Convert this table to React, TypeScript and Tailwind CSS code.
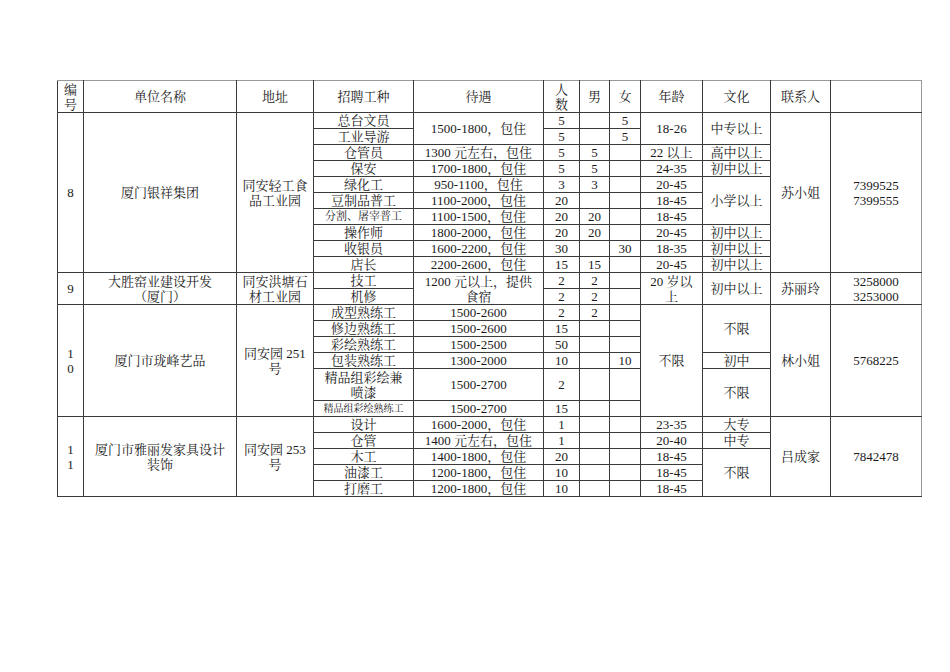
import React from "react";

type CP = { children?: React.ReactNode; rs?: number; cls?: string };
const C = ({ children, rs, cls }: CP) => (
  <td
    rowSpan={rs}
    className={
      "border border-[#3a3a3a] p-0 text-center align-middle whitespace-nowrap " +
      (cls || "")
    }
  >
    {children}
  </td>
);

const R = ({ children, tall }: { children: React.ReactNode; tall?: boolean }) => (
  <tr className={tall ? "h-[32px]" : "h-[16px]"}>{children}</tr>
);

export default function App() {
  return (
    <div
      className="min-h-[672px] w-[950px] bg-white pt-[80px] pl-[57px] text-[#1a1a1a] text-[13px] leading-[15px]"
      style={{ fontFamily: '"Liberation Serif", "Noto Serif CJK SC", "Noto Sans CJK SC", serif' }}
    >
      <table className="w-[864px] table-fixed border-collapse">
        <colgroup>
          <col className="w-[26px]" />
          <col className="w-[153px]" />
          <col className="w-[77px]" />
          <col className="w-[100px]" />
          <col className="w-[130px]" />
          <col className="w-[36px]" />
          <col className="w-[30px]" />
          <col className="w-[31px]" />
          <col className="w-[62px]" />
          <col className="w-[68px]" />
          <col className="w-[60px]" />
          <col className="w-[91px]" />
        </colgroup>
        <tbody>
          <R tall>
            <C cls="border-t-[#999]">编<br />号</C>
            <C cls="border-t-[#999]">单位名称</C>
            <C cls="border-t-[#999]">地址</C>
            <C cls="border-t-[#999]">招聘工种</C>
            <C cls="border-t-[#999]">待遇</C>
            <C cls="border-t-[#999]">人<br />数</C>
            <C cls="border-t-[#999]">男</C>
            <C cls="border-t-[#999]">女</C>
            <C cls="border-t-[#999]">年龄</C>
            <C cls="border-t-[#999]">文化</C>
            <C cls="border-t-[#999]">联系人</C>
            <C cls="border-t-[#999] border-r-[#999]"></C>
          </R>

          {/* 8 */}
          <R>
            <C rs={10}>8</C>
            <C rs={10}>厦门银祥集团</C>
            <C rs={10}>同安轻工食<br />品工业园</C>
            <C>总台文员</C>
            <C rs={2}>1500-1800，包住</C>
            <C>5</C>
            <C></C>
            <C>5</C>
            <C rs={2}>18-26</C>
            <C rs={2}>中专以上</C>
            <C rs={10}>苏小姐</C>
            <C rs={10} cls="border-r-[#999]">7399525<br />7399555</C>
          </R>
          <R>
            <C>工业导游</C>
            <C>5</C>
            <C></C>
            <C>5</C>
          </R>
          <R>
            <C>仓管员</C>
            <C>1300 元左右，包住</C>
            <C>5</C>
            <C>5</C>
            <C></C>
            <C>22 以上</C>
            <C>高中以上</C>
          </R>
          <R>
            <C>保安</C>
            <C>1700-1800，包住</C>
            <C>5</C>
            <C>5</C>
            <C></C>
            <C>24-35</C>
            <C>初中以上</C>
          </R>
          <R>
            <C>绿化工</C>
            <C>950-1100，包住</C>
            <C>3</C>
            <C>3</C>
            <C></C>
            <C>20-45</C>
            <C rs={3}>小学以上</C>
          </R>
          <R>
            <C>豆制品普工</C>
            <C>1100-2000，包住</C>
            <C>20</C>
            <C></C>
            <C></C>
            <C>18-45</C>
          </R>
          <R>
            <C cls="text-[11px]">分割、屠宰普工</C>
            <C>1100-1500，包住</C>
            <C>20</C>
            <C>20</C>
            <C></C>
            <C>18-45</C>
          </R>
          <R>
            <C>操作师</C>
            <C>1800-2000，包住</C>
            <C>20</C>
            <C>20</C>
            <C></C>
            <C>20-45</C>
            <C>初中以上</C>
          </R>
          <R>
            <C>收银员</C>
            <C>1600-2200，包住</C>
            <C>30</C>
            <C></C>
            <C>30</C>
            <C>18-35</C>
            <C>初中以上</C>
          </R>
          <R>
            <C>店长</C>
            <C>2200-2600，包住</C>
            <C>15</C>
            <C>15</C>
            <C></C>
            <C>20-45</C>
            <C>初中以上</C>
          </R>

          {/* 9 */}
          <R>
            <C rs={2}>9</C>
            <C rs={2}>大胜窑业建设开发<br />（厦门）</C>
            <C rs={2}>同安洪塘石<br />材工业园</C>
            <C>技工</C>
            <C rs={2}>1200 元以上，提供<br />食宿</C>
            <C>2</C>
            <C>2</C>
            <C></C>
            <C rs={2}>20 岁以<br />上</C>
            <C rs={2}>初中以上</C>
            <C rs={2}>苏丽玲</C>
            <C rs={2} cls="border-r-[#999]">3258000<br />3253000</C>
          </R>
          <R>
            <C>机修</C>
            <C>2</C>
            <C>2</C>
            <C></C>
          </R>

          {/* 10 */}
          <R>
            <C rs={6}>1<br />0</C>
            <C rs={6}>厦门市珑峰艺品</C>
            <C rs={6}>同安园 251<br />号</C>
            <C>成型熟练工</C>
            <C>1500-2600</C>
            <C>2</C>
            <C>2</C>
            <C></C>
            <C rs={6}>不限</C>
            <C rs={3}>不限</C>
            <C rs={6}>林小姐</C>
            <C rs={6} cls="border-r-[#999]">5768225</C>
          </R>
          <R>
            <C>修边熟练工</C>
            <C>1500-2600</C>
            <C>15</C>
            <C></C>
            <C></C>
          </R>
          <R>
            <C>彩绘熟练工</C>
            <C>1500-2500</C>
            <C>50</C>
            <C></C>
            <C></C>
          </R>
          <R>
            <C>包装熟练工</C>
            <C>1300-2000</C>
            <C>10</C>
            <C></C>
            <C>10</C>
            <C>初中</C>
          </R>
          <R tall>
            <C>精品组彩绘兼<br />喷漆</C>
            <C>1500-2700</C>
            <C>2</C>
            <C></C>
            <C></C>
            <C rs={2}>不限</C>
          </R>
          <R>
            <C cls="text-[10px]">精品组彩绘熟练工</C>
            <C>1500-2700</C>
            <C>15</C>
            <C></C>
            <C></C>
          </R>

          {/* 11 */}
          <R>
            <C rs={5}>1<br />1</C>
            <C rs={5}>厦门市雅丽发家具设计<br />装饰</C>
            <C rs={5}>同安园 253<br />号</C>
            <C>设计</C>
            <C>1600-2000，包住</C>
            <C>1</C>
            <C></C>
            <C></C>
            <C>23-35</C>
            <C>大专</C>
            <C rs={5}>吕成家</C>
            <C rs={5} cls="border-r-[#999]">7842478</C>
          </R>
          <R>
            <C>仓管</C>
            <C>1400 元左右，包住</C>
            <C>1</C>
            <C></C>
            <C></C>
            <C>20-40</C>
            <C>中专</C>
          </R>
          <R>
            <C>木工</C>
            <C>1400-1800，包住</C>
            <C>20</C>
            <C></C>
            <C></C>
            <C>18-45</C>
            <C rs={3}>不限</C>
          </R>
          <R>
            <C>油漆工</C>
            <C>1200-1800，包住</C>
            <C>10</C>
            <C></C>
            <C></C>
            <C>18-45</C>
          </R>
          <R>
            <C>打磨工</C>
            <C>1200-1800，包住</C>
            <C>10</C>
            <C></C>
            <C></C>
            <C>18-45</C>
          </R>
        </tbody>
      </table>
    </div>
  );
}
